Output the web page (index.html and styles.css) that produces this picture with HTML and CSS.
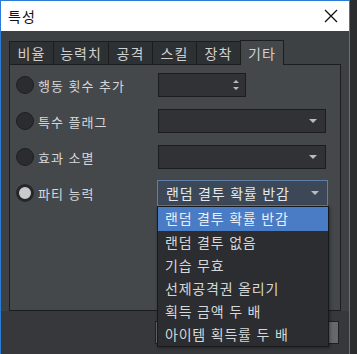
FILE: index.html
```html
<!DOCTYPE html>
<html lang="ko">

<head>
    <meta charset="UTF-8">
    <meta name="viewport" content="width=device-width, initial-scale=1.0">
    <title>특성</title>
    <link rel="stylesheet" href="styles.css">
</head>

<body>

    <div class="window">
        <div class="titlebar">
            <span class="title">특성</span>
            <svg class="close" width="14" height="14" viewBox="0 0 14 14">
                <path d="M1 1 L13 13 M13 1 L1 13" stroke="#111" stroke-width="1.3" fill="none"/>
            </svg>
        </div>

        <div class="content">
            <div class="tabs">
                <div class="tab">비율</div>
                <div class="tab">능력치</div>
                <div class="tab">공격</div>
                <div class="tab">스킬</div>
                <div class="tab">장착</div>
                <div class="tab active">기타</div>
            </div>

            <div class="panel">
                <div class="row">
                    <span class="radio"></span>
                    <span class="label">행동 횟수 추가</span>
                    <div class="field spin">
                        <span class="spin-arrows">
                            <svg width="8" height="14" viewBox="0 0 8 14">
                                <path d="M1 5 L4 2 L7 5 Z M1 9 L4 12 L7 9 Z" fill="#b9bcbf"/>
                            </svg>
                        </span>
                    </div>
                </div>
                <div class="row">
                    <span class="radio"></span>
                    <span class="label">특수 플래그</span>
                    <div class="field combo"><span class="arrow"></span></div>
                </div>
                <div class="row">
                    <span class="radio"></span>
                    <span class="label">효과 소멸</span>
                    <div class="field combo"><span class="arrow"></span></div>
                </div>
                <div class="row">
                    <span class="radio checked"></span>
                    <span class="label">파티 능력</span>
                    <div class="field combo open">
                        <span class="value">랜덤 결투 확률 반감</span>
                        <span class="arrow"></span>
                    </div>
                </div>
            </div>

            <div class="footer">
                <div class="button"></div>
                <div class="button"></div>
            </div>

            <ul class="dropdown">
                <li class="selected">랜덤 결투 확률 반감</li>
                <li>랜덤 결투 없음</li>
                <li>기습 무효</li>
                <li>선제공격권 올리기</li>
                <li>획득 금액 두 배</li>
                <li>아이템 획득률 두 배</li>
            </ul>
        </div>
    </div>

</body>

</html>
```

FILE: styles.css
```css
body {
    margin: 0;
    background-color: #2c2d2f;
    font-family: 'Noto Sans CJK KR', 'Noto Sans', sans-serif;
    width: 357px;
    height: 354px;
    overflow: hidden;
}

.window {
    width: 350px;
    height: 354px;
    box-sizing: border-box;
    border: 1px solid #2d7bd8;
    border-bottom: none;
    display: flex;
    flex-direction: column;
}

.titlebar {
    height: 30px;
    background-color: #fff;
    display: flex;
    align-items: center;
    justify-content: space-between;
    padding: 0 11px 0 7px;
}

.title {
    font-size: 14px;
    color: #111;
    letter-spacing: 1px;
}

.content {
    flex: 1;
    background-color: #3e4144;
    position: relative;
    display: flex;
    flex-direction: column;
    padding: 9px 8px 0 8px;
}

.tabs {
    display: flex;
    height: 24px;
}

.tab {
    width: 44px;
    box-sizing: border-box;
    background-color: #2e3134;
    border: 1px solid #1c1d1f;
    border-bottom: none;
    border-right: none;
    color: #cfd0d1;
    font-size: 14px;
    letter-spacing: 1px;
    display: flex;
    align-items: center;
    justify-content: center;
    margin-top: 1px;
}

.tab:nth-child(2) {
    width: 55px;
}

.tab.active {
    background-color: #45484b;
    border-right: 1px solid #1c1d1f;
    margin-top: 0;
    margin-bottom: -1px;
    position: relative;
    z-index: 1;
}

.panel {
    width: 332px;
    height: 247px;
    box-sizing: border-box;
    background-color: #45484b;
    border: 1px solid #1c1d1f;
    padding: 8px 0 0 6px;
    display: flex;
    flex-direction: column;
    gap: 12px;
}

.row {
    display: flex;
    align-items: center;
    height: 24px;
}

.radio {
    width: 18px;
    height: 18px;
    box-sizing: border-box;
    border-radius: 50%;
    background-color: #2a2c2f;
    border: 1px solid #1e1f21;
}

.radio.checked {
    background-color: #c9cacb;
    border: 3px solid #262729;
}

.label {
    width: 120px;
    margin-left: 4px;
    color: #d6d7d8;
    font-size: 13px;
    letter-spacing: 1px;
}

.field {
    height: 24px;
    box-sizing: border-box;
    background-color: #303235;
    border: 1px solid #1c1d1f;
    display: flex;
    align-items: center;
    justify-content: flex-end;
}

.spin {
    width: 88px;
    padding-right: 5px;
}

.spin-arrows svg {
    display: block;
}

.combo {
    width: 168px;
    padding-right: 8px;
}

.combo.open {
    width: 171px;
    height: 26px;
    margin-left: -1px;
    background-color: #3c4857;
    border-color: #5b7fa6;
    justify-content: space-between;
    padding-left: 8px;
}

.value {
    color: #e6e8ea;
    font-size: 14px;
    letter-spacing: 0.8px;
}

.arrow {
    width: 0;
    height: 0;
    border-left: 4px solid transparent;
    border-right: 4px solid transparent;
    border-top: 4px solid #b9bcbf;
}

.footer {
    flex: 1;
    background-color: #36383b;
    margin: 0 -8px;
    display: flex;
    justify-content: flex-end;
    gap: 6px;
    padding: 10px 10px 0 0;
}

.button {
    width: 89px;
    height: 23px;
    box-sizing: border-box;
    background-color: #66696c;
    border: 1px solid #202123;
}

.dropdown {
    position: absolute;
    left: 156px;
    top: 175px;
    width: 172px;
    margin: 0;
    padding: 0;
    list-style: none;
    box-sizing: border-box;
    background-color: #2b2d30;
    border: 1px solid #18191a;
    box-shadow: 1px 1px 3px rgba(0, 0, 0, 0.4);
}

.dropdown li {
    height: 23px;
    line-height: 23px;
    padding-left: 7px;
    color: #d6d7d8;
    font-size: 14px;
    letter-spacing: 0.8px;
}

.dropdown li.selected {
    height: 24px;
    background-color: #4a7cc6;
    color: #e9eef6;
}
```
